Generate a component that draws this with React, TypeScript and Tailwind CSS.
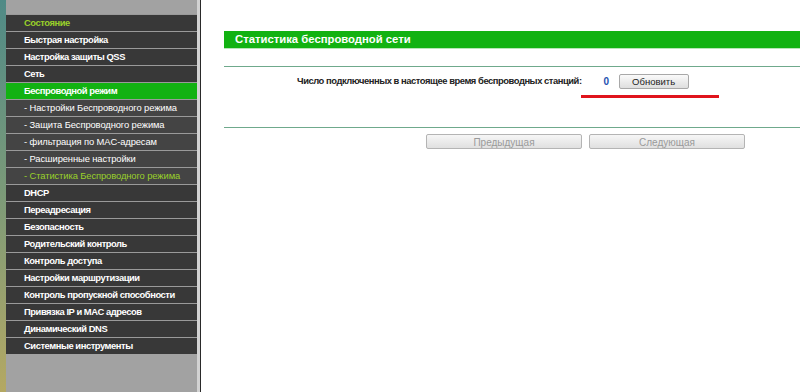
const menu = [
  { label: "Состояние", kind: "main", active: true },
  { label: "Быстрая настройка", kind: "main" },
  { label: "Настройка защиты QSS", kind: "main" },
  { label: "Сеть", kind: "main" },
  { label: "Беспроводной режим", kind: "open" },
  { label: "- Настройки Беспроводного режима", kind: "sub" },
  { label: "- Защита Беспроводного режима", kind: "sub" },
  { label: "- фильтрация по MAC-адресам", kind: "sub" },
  { label: "- Расширенные настройки", kind: "sub" },
  { label: "- Статистика Беспроводного режима", kind: "sub", active: true },
  { label: "DHCP", kind: "main" },
  { label: "Переадресация", kind: "main" },
  { label: "Безопасность", kind: "main" },
  { label: "Родительский контроль", kind: "main" },
  { label: "Контроль доступа", kind: "main" },
  { label: "Настройки маршрутизации", kind: "main" },
  { label: "Контроль пропускной способности", kind: "main" },
  { label: "Привязка IP и MAC адресов", kind: "main" },
  { label: "Динамический DNS", kind: "main" },
  { label: "Системные инструменты", kind: "main" },
];

const App = () => {
  return (
    <div
      className="flex h-[392px] w-[800px] overflow-hidden bg-white"
      style={{ fontFamily: '"Liberation Sans", Arial, sans-serif' }}
    >
      {/* desktop edge */}
      <div className="w-[6px] bg-gradient-to-b from-[#4f8a86] via-[#7c9a78] to-[#b4a862]" />

      {/* Sidebar */}
      <div className="w-[191px] bg-[#a2a2a2] pt-[14px]">
        <ul>
          {menu.map((item) => (
            <li
              key={item.label}
              className={
                "flex h-[17px] items-center whitespace-nowrap border-t border-[#9a9a9a] pl-[18px] text-[9.4px] " +
                (item.kind === "open"
                  ? "bg-[#12b212] font-bold tracking-[-0.45px] text-white"
                  : item.kind === "sub"
                  ? "bg-[#444444] text-[9.4px] tracking-[-0.1px] " + (item.active ? "text-[#99d02a]" : "text-white")
                  : "bg-[#383838] font-bold tracking-[-0.45px] " + (item.active ? "text-[#99d02a]" : "text-white"))
              }
            >
              {item.label}
            </li>
          ))}
        </ul>
      </div>

      {/* frame border */}
      <div className="w-[3px] bg-[#d2d2d2]" />
      <div className="w-px bg-[#2a2a2a]" />

      {/* Content */}
      <div className="flex-1 pl-[23px] pt-[31px]">
        <div className="flex h-[17px] items-center bg-[#12b212] pl-[11px] text-[11.3px] font-bold text-white">
          Статистика беспроводной сети
        </div>
        <div className="h-px bg-[#b8e6b8]" />

        <div className="mt-[17px] border-t border-[#6fa98c]">
          <div className="flex h-[28px] items-center pl-[73px] pt-[1px]">
            <span className="text-[9.4px] font-bold tracking-[-0.45px] text-[#222]">
              Число подключенных в настоящее время беспроводных станций:
            </span>
            <span className="ml-[22px] w-[15px] text-[10px] font-bold text-[#1d4fb0]">0</span>
            <button className="h-[15px] w-[70px] rounded-[2px] border border-[#a8a8a8] bg-gradient-to-b from-[#fafafa] to-[#dedede] text-[9.5px] text-[#222]">
              Обновить
            </button>
          </div>
          <div className="ml-[357px] h-[3px] w-[138px] bg-[#e0141c]" />
        </div>

        <div className="mt-[29px] border-t border-[#6fa98c]">
          <div className="mt-[6px] flex gap-[7px] pl-[202px]">
            <button className="h-[15px] w-[156px] rounded-[2px] border border-[#b4b4b4] bg-gradient-to-b from-[#f6f6f6] to-[#e0e0e0] text-[10px] text-[#9a9a9a]">
              Предыдущая
            </button>
            <button className="h-[15px] w-[156px] rounded-[2px] border border-[#b4b4b4] bg-gradient-to-b from-[#f6f6f6] to-[#e0e0e0] text-[10px] text-[#9a9a9a]">
              Следующая
            </button>
          </div>
        </div>
      </div>
    </div>
  );
};

export default App;
